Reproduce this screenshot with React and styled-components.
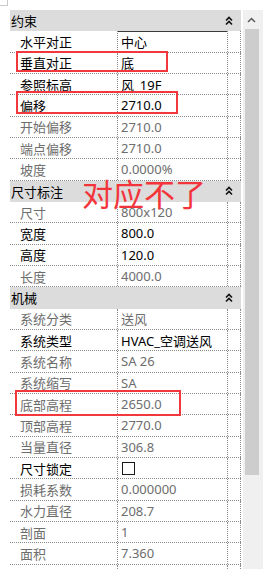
import React from "react";
import styled, { createGlobalStyle } from "styled-components";

const GlobalStyle = createGlobalStyle`
  html, body {
    margin: 0;
    padding: 0;
    background: #ffffff;
    overflow: hidden;
  }
  body {
    font-family: "Noto Sans", "Noto Sans CJK SC", sans-serif;
    font-size: 13px;
  }
`;

const ROW_H = "21.33px";

// 属性データ（editable = 黒文字）
const sections = [
  {
    title: "约束",
    rows: [
      { label: "水平对正", value: "中心", editable: true, input: true },
      { label: "垂直对正", value: "底", editable: true },
      { label: "参照标高", value: "风_19F", editable: true },
      { label: "偏移", value: "2710.0", editable: true },
      { label: "开始偏移", value: "2710.0" },
      { label: "端点偏移", value: "2710.0" },
      { label: "坡度", value: "0.0000%" },
    ],
  },
  {
    title: "尺寸标注",
    rows: [
      { label: "尺寸", value: "800x120" },
      { label: "宽度", value: "800.0", editable: true },
      { label: "高度", value: "120.0", editable: true },
      { label: "长度", value: "4000.0" },
    ],
  },
  {
    title: "机械",
    rows: [
      { label: "系统分类", value: "送风" },
      { label: "系统类型", value: "HVAC_空调送风", editable: true },
      { label: "系统名称", value: "SA 26" },
      { label: "系统缩写", value: "SA" },
      { label: "底部高程", value: "2650.0" },
      { label: "顶部高程", value: "2770.0" },
      { label: "当量直径", value: "306.8" },
      { label: "尺寸锁定", checkbox: true, editable: true },
      { label: "损耗系数", value: "0.000000" },
      { label: "水力直径", value: "208.7" },
      { label: "剖面", value: "1" },
      { label: "面积", value: "7.360" },
      { label: "", value: "" },
    ],
  },
];

const Stage = styled.div`
  position: relative;
  width: 263px;
  height: 569px;
  overflow: hidden;
`;

const Corner = styled.div`
  position: absolute;
  left: 0;
  top: 0;
  width: 7px;
  height: 5px;
  border-right: 1px solid #c8c8c8;
  border-bottom: 1px solid #c8c8c8;
`;

const Layout = styled.div`
  display: flex;
  padding-top: 10px;
  padding-left: 10px;
  height: 100%;
  box-sizing: border-box;
`;

const Grid = styled.div`
  width: 231px;
  display: flex;
  flex-direction: column;
`;

const Header = styled.div`
  height: ${ROW_H};
  flex-shrink: 0;
  background: #dcdcdc;
  display: flex;
  align-items: center;
  justify-content: space-between;
  padding: 0 8px 0 1px;
  box-sizing: border-box;
  color: #000;
`;

const Row = styled.div`
  height: ${ROW_H};
  flex-shrink: 0;
  display: grid;
  grid-template-columns: 108px 110px 13px;
  box-sizing: border-box;
  border-bottom: 1px dotted #8c8c8c;
`;

const Cell = styled.div`
  display: flex;
  align-items: center;
  border-right: 1px dotted #8c8c8c;
  white-space: nowrap;
  overflow: hidden;
  color: ${(p) => (p.$editable ? "#000000" : "#6d6d6d")};
`;

const Label = styled(Cell)`
  padding-left: 10px;
`;

const Value = styled(Cell)`
  padding-left: 3px;
  position: relative;
`;

const InputBox = styled.div`
  position: absolute;
  left: -1px;
  top: 0;
  right: -1px;
  bottom: -1px;
  border: 1.5px solid #3a3a3a;
  box-sizing: border-box;
`;

const CheckBox = styled.div`
  width: 13px;
  height: 13px;
  margin-left: 1px;
  border: 1px solid #1a1a1a;
  box-sizing: border-box;
  background: #fff;
`;

const Scrollbar = styled.div`
  margin-left: 2px;
  width: 20px;
  height: 100%;
  background: #f0f0f0;
  display: flex;
  flex-direction: column;
  align-items: center;
`;

const ArrowBtn = styled.div`
  height: 19px;
  width: 100%;
  display: flex;
  align-items: center;
  justify-content: center;
  padding-right: 3px;
  box-sizing: border-box;
`;

const Thumb = styled.div`
  width: 14px;
  height: 446px;
  margin-right: 3px;
  background: #cdcdcd;
`;

// 赤い注釈の枠
const Mark = styled.div`
  position: absolute;
  border: 2px solid #f2383c;
  box-sizing: border-box;
`;

const Note = styled.div`
  position: absolute;
  left: 82px;
  top: 177px;
  font-family: "Noto Sans CJK SC", sans-serif;
  font-size: 31px;
  line-height: 1;
  color: #f3353b;
`;

const DoubleUp = () => (
  <svg width="8" height="10" viewBox="0 0 8 10">
    <path d="M1 4.5 L4 1.5 L7 4.5" fill="none" stroke="#111" strokeWidth="1.6" />
    <path d="M1 8.5 L4 5.5 L7 8.5" fill="none" stroke="#111" strokeWidth="1.6" />
  </svg>
);

const UpArrow = () => (
  <svg width="9" height="6" viewBox="0 0 9 6">
    <path d="M1 5 L4.5 1.5 L8 5" fill="none" stroke="#5a5a5a" strokeWidth="1.5" />
  </svg>
);

const App = () => {
  return (
    <Stage>
      <GlobalStyle />
      <Corner />
      <Layout>
        <Grid>
          {sections.map((sec) => (
            <React.Fragment key={sec.title}>
              <Header>
                <span>{sec.title}</span>
                <DoubleUp />
              </Header>
              {sec.rows.map((r, i) => (
                <Row key={i}>
                  <Label $editable={r.editable}>{r.label}</Label>
                  <Value $editable={r.editable}>
                    {r.checkbox ? <CheckBox /> : r.value}
                    {r.input && <InputBox />}
                  </Value>
                  <Cell />
                </Row>
              ))}
            </React.Fragment>
          ))}
        </Grid>
        <Scrollbar>
          <ArrowBtn>
            <UpArrow />
          </ArrowBtn>
          <Thumb />
        </Scrollbar>
      </Layout>

      <Mark style={{ left: 16, top: 51, width: 152, height: 21 }} />
      <Mark style={{ left: 16, top: 91, width: 162, height: 23 }} />
      <Mark style={{ left: 15, top: 390, width: 166, height: 26 }} />
      <Note>对应不了</Note>
    </Stage>
  );
};

export default App;
